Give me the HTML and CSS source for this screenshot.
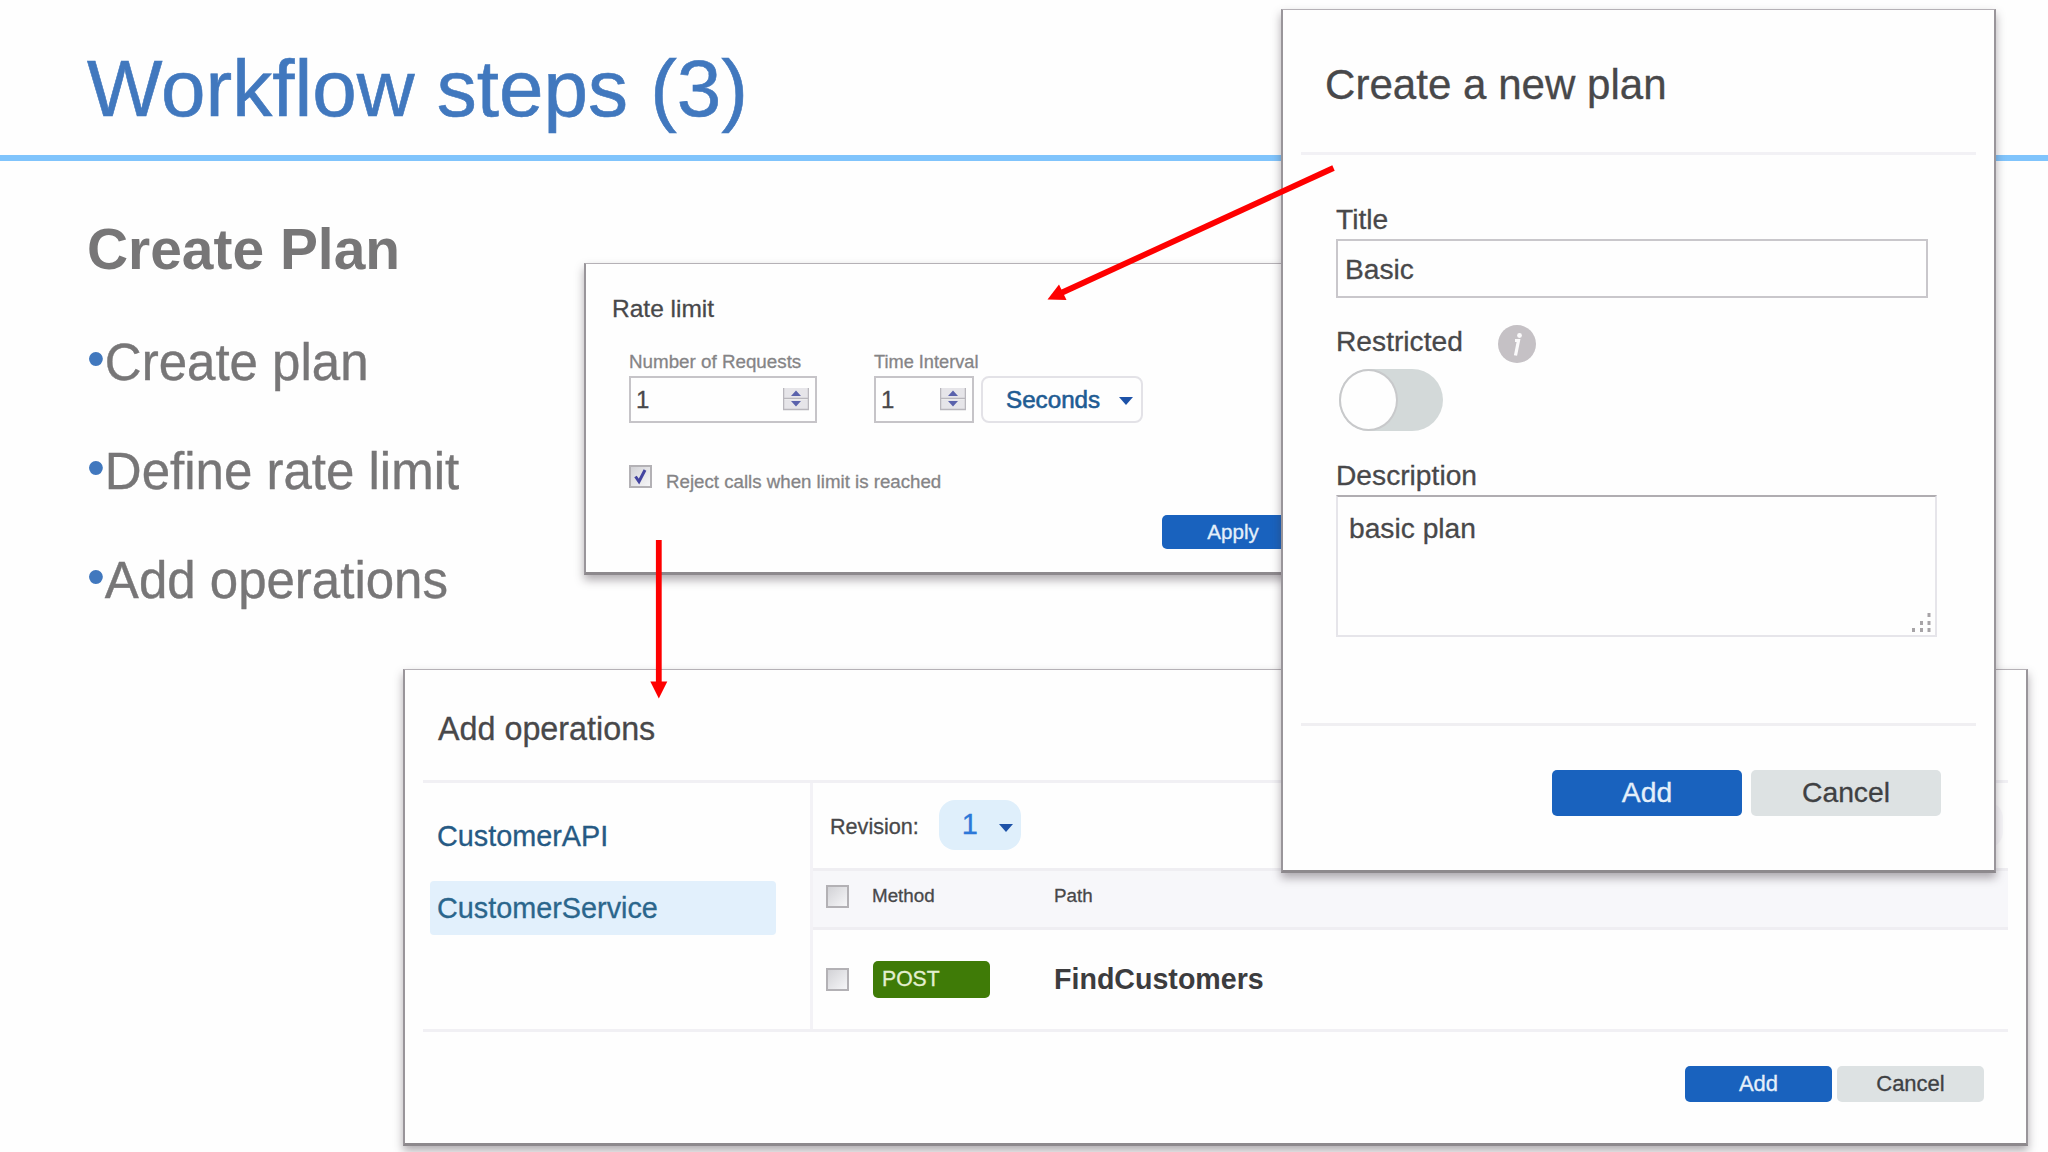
FILE: index.html
```html
<!DOCTYPE html>
<html lang="en">
<head>
    <meta charset="UTF-8">
    <meta name="viewport" content="width=device-width, initial-scale=1.0">
    <title>Workflow steps (3)</title>

    <link rel="stylesheet" href="styles.css">
</head>
<body>
<div class="slide">

    <!-- Slide heading -->
    <header class="slide-header">
        <h1>Workflow steps (3)</h1>
    </header>

    <!-- Outline -->
    <section class="outline">
        <h2>Create Plan</h2>
        <ul>
            <li>Create plan</li>
            <li>Define rate limit</li>
            <li>Add operations</li>
        </ul>
    </section>

    <!-- Rate limit window -->
    <section class="window rate-window">
        <h3>Rate limit</h3>
        <div class="rate-fields">
            <div class="rate-field requests">
                <span class="small-label">Number of Requests</span>
                <div class="number-box">
                    <span>1</span>
                    <svg class="spinner" viewBox="0 0 26 23">
                        <path d="M0 0h26v10H0zM0 12h26v10H0z" fill="#e6e5e9"/>
                        <path d="M0 10.500h26M0 21.500h26M25.500 0v22M.5 0v22" stroke="#b9b7bd" stroke-width="1.500"/>
                        <path d="M13 2.500l5 5.500h-10zM13 18.500l5-5.500h-10z" fill="#5a62ac"/>
                    </svg>
                </div>
            </div>
            <div class="rate-field interval">
                <span class="small-label narrow">Time Interval</span>
                <div class="number-box">
                    <span>1</span>
                    <svg class="spinner" viewBox="0 0 26 23">
                        <path d="M0 0h26v10H0zM0 12h26v10H0z" fill="#e6e5e9"/>
                        <path d="M0 10.500h26M0 21.500h26M25.500 0v22M.5 0v22" stroke="#b9b7bd" stroke-width="1.500"/>
                        <path d="M13 2.500l5 5.500h-10zM13 18.500l5-5.500h-10z" fill="#5a62ac"/>
                    </svg>
                </div>
            </div>
            <div class="unit-select">
                <span>Seconds</span>
                <i class="caret"></i>
            </div>
        </div>
        <div class="reject-row">
            <span class="checkbox">
                <svg viewBox="0 0 23 23"><path d="M6.500 11.500l3.500 5L16 5" fill="none" stroke="#4344a0" stroke-width="3"/></svg>
            </span>
            <span class="reject-text">Reject calls when limit is reached</span>
        </div>
        <div class="rate-actions">
            <div class="btn btn-blue btn-apply">Apply</div>
        </div>
    </section>

    <!-- Add operations window -->
    <section class="window ops-window">
        <h3>Add operations</h3>
        <div class="ops-body">
            <div class="api-list">
                <a class="api">CustomerAPI</a>
                <a class="api selected">CustomerService</a>
            </div>
            <div class="ops-table">
                <div class="revision-row">
                    <span class="revision-label">Revision:</span>
                    <div class="revision-pill">
                        <span>1</span>
                        <i class="caret"></i>
                    </div>
                    <div class="side-pill"></div>
                </div>
                <div class="ops-row ops-head">
                    <span class="checkbox"></span>
                    <span>Method</span>
                    <span>Path</span>
                </div>
                <div class="ops-row">
                    <span class="checkbox"></span>
                    <span class="badge">POST</span>
                    <span class="path">FindCustomers</span>
                </div>
            </div>
        </div>
        <div class="ops-actions">
            <div class="btn btn-blue">Add</div>
            <div class="btn btn-gray">Cancel</div>
        </div>
    </section>

    <!-- Create a new plan window -->
    <section class="window plan-window">
        <h3>Create a new plan</h3>
        <div class="plan-body">
            <div class="label">Title</div>
            <div class="text-box">Basic</div>
            <div class="restricted-row">
                <div class="label">Restricted</div>
                <svg class="info" viewBox="0 0 38 38">
                    <circle cx="19" cy="19" r="19" fill="#c5c1c5"/>
                    <circle cx="21.500" cy="10.500" r="2.400" fill="#fbfafb"/>
                    <path d="M17 15.500h3.500l-3 15" fill="none" stroke="#fbfafb" stroke-width="3.200"/>
                </svg>
            </div>
            <div class="toggle"><span class="knob"></span></div>
            <div class="label">Description</div>
            <div class="text-area">
                <span>basic plan</span>
                <svg class="grip" viewBox="0 0 19 20">
                    <path d="M15.500 0h3v4h-3zM15.500 8h3v4h-3zM15.500 15h3v4h-3zM8 8h3v4H8zM8 15h3v4H8zM0 15h3v4H0z" fill="#a7a4a7"/>
                </svg>
            </div>
        </div>
        <div class="plan-actions">
            <div class="btn btn-blue">Add</div>
            <div class="btn btn-gray">Cancel</div>
        </div>
    </section>

    <!-- Arrows between the windows -->
    <svg class="arrows" viewBox="0 0 2048 1152">
        <g stroke="#fe0000" stroke-width="5.800">
            <path d="M1333.500 168L1060 293.500"/>
            <path d="M658.800 540V684"/>
        </g>
        <g fill="#fe0000">
            <path d="M1047.500 299.500L1059 284.500L1066.500 300z"/>
            <path d="M658.800 698.500L650.300 681.500H667.300z"/>
        </g>
    </svg>

</div>
</body>
</html>
```
FILE: styles.css
```css
/* Global Reset */
* {
    margin: 0;
    padding: 0;
    box-sizing: border-box;
}

body {
    font-family: "Liberation Sans", Arial, sans-serif;
    background-color: #fefefe;
    color: #48484a;
}

svg {
    display: block;
}

.slide {
    position: relative;
    width: 2048px;
    height: 1152px;
    overflow: hidden;
}

/* Slide heading */
.slide-header {
    height: 161px;
    padding: 43px 87px 0;
    border-bottom: 6px solid #80c4fc;
}

.slide-header h1 {
    font-size: 80px;
    font-weight: normal;
    line-height: 92px;
    color: #4178be;
    -webkit-text-stroke: 0.6px #4178be;
}

/* Outline */
.outline {
    padding: 56px 87px 0;
    color: #777677;
}

.outline h2 {
    font-size: 56.9px;
    line-height: 64px;
}

.outline ul {
    margin-top: 27px;
    list-style: none;
}

.outline li {
    font-size: 51px;
    line-height: 109px;
    -webkit-text-stroke: 0.4px #777677;
}

.outline li::before {
    content: "•";
    position: relative;
    top: -4px;
    color: #4178be;
    -webkit-text-stroke: 0;
}

/* Windows laid over the slide */
.window {
    position: absolute;
    background-color: #fefefe;
    border: 2px solid #99959a;
    border-top: 1px solid #b5b1b6;
    border-bottom: 3px solid #8d898d;
    box-shadow: 0 5px 9px rgba(60, 50, 60, 0.4);
    -webkit-text-stroke: 0.3px;
}

.window h3 {
    font-weight: normal;
}

.checkbox {
    width: 23px;
    height: 23px;
    border: 2px solid #b3b1b5;
    background: linear-gradient(135deg, #d2d2d6, #f6f6f8);
    flex-shrink: 0;
}

.checkbox svg {
    margin: -2px;
    width: 23px;
    height: 23px;
}

.caret {
    border: 7.5px solid transparent;
    border-top: 8px solid #1d52a8;
    border-bottom: none;
}

.btn {
    display: flex;
    align-items: center;
    justify-content: center;
    border-radius: 5px;
}

.btn-blue {
    background-color: #1962be;
    color: #e4effa;
}

.btn-gray {
    background-color: #dde2e3;
    color: #3f4143;
}

/* Rate limit */
.rate-window {
    left: 584px;
    top: 263px;
    width: 740px;
    height: 312px;
    padding: 31px 18px 0 26px;
}

.rate-window h3 {
    font-size: 24.5px;
    line-height: 28px;
}

.rate-fields {
    display: flex;
    align-items: flex-end;
    margin: 29px 0 0 17px;
}

.requests {
    width: 188px;
    margin-right: 57px;
}

.interval {
    width: 100px;
    margin-right: 7px;
}

.small-label {
    display: block;
    margin-bottom: 4px;
    font-size: 18.8px;
    line-height: 20px;
    color: #858486;
    white-space: nowrap;
}

.small-label.narrow {
    font-size: 18.2px;
}

.number-box {
    display: flex;
    align-items: center;
    justify-content: space-between;
    height: 47px;
    padding: 0 6px 0 5px;
    border: 2px solid #c6c4c8;
    font-size: 24px;
}

.spinner {
    width: 26px;
    height: 23px;
}

.unit-select {
    display: flex;
    align-items: center;
    justify-content: space-between;
    width: 162px;
    height: 47px;
    padding: 0 8px 0 23px;
    border: 2px solid #e3e2e7;
    border-radius: 8px;
    font-size: 24.2px;
    color: #1f5c93;
    -webkit-text-stroke: 0.6px #1f5c93;
}

.unit-select .caret {
    margin-top: 3px;
}

.reject-row {
    display: flex;
    height: 28px;
    margin: 42px 0 0 17px;
}

.reject-text {
    margin-left: 14px;
    padding-top: 5px;
    font-size: 18.7px;
    line-height: 23px;
    color: #858486;
}

.rate-actions {
    display: flex;
    justify-content: flex-end;
    margin-top: 22px;
}

.btn-apply {
    width: 142px;
    height: 34px;
    font-size: 20.6px;
}

/* Add operations */
.ops-window {
    left: 403px;
    top: 669px;
    width: 1625px;
    height: 477px;
    padding: 0 18px;
}

.ops-window h3 {
    height: 113px;
    padding: 39px 0 0 15px;
    border-bottom: 3px solid #f1f0f4;
    font-size: 32.3px;
    line-height: 40px;
}

.ops-body {
    display: grid;
    grid-template-columns: 390px 1fr;
    height: 249px;
    border-bottom: 3px solid #f1f0f4;
}

.api-list {
    display: flex;
    flex-direction: column;
    gap: 18px;
    padding: 26px 34px 0 7px;
    border-right: 3px solid #f3f2f6;
}

.api {
    padding-left: 7px;
    border-radius: 4px;
    font-size: 28.8px;
    line-height: 54px;
    color: #265a84;
}

.api.selected {
    background-color: #e2f0fc;
    color: #2b668c;
}

.revision-row {
    display: flex;
    align-items: center;
    height: 85px;
    padding: 0 0 2px 17px;
    overflow: hidden;
}

.revision-label {
    margin-top: 4px;
    font-size: 21.6px;
}

.revision-pill {
    display: flex;
    align-items: center;
    justify-content: space-between;
    width: 82px;
    height: 50px;
    margin-left: 20px;
    padding: 0 8px 0 23px;
    border-radius: 16px;
    background-color: #dfeffb;
    font-size: 29px;
    color: #2c78d8;
}

.revision-pill .caret {
    margin-top: 6px;
}

.side-pill {
    width: 70px;
    height: 46px;
    margin: 0 5px 0 auto;
    border-radius: 16px;
    background-color: #f8f7fa;
}

.ops-row {
    display: grid;
    grid-template-columns: 47px 182px 1fr;
    align-items: center;
    height: 99px;
    padding-left: 13px;
}

.ops-head {
    height: 62px;
    padding-bottom: 7px;
    border-top: 3px solid #efeef2;
    border-bottom: 3px solid #efeef2;
    background-color: #f7f7fa;
    font-size: 18.8px;
}

.ops-head span + span {
    margin-left: -1px;
}

.ops-head .checkbox {
    margin-top: 1px;
}

.badge {
    width: 117px;
    height: 37px;
    padding-left: 9px;
    border-radius: 5px;
    background-color: #3f7b07;
    font-size: 21.2px;
    line-height: 35px;
    color: #e3efcf;
}

.path {
    margin-left: -1px;
    font-size: 28.6px;
    font-weight: bold;
    color: #3c3c3e;
    -webkit-text-stroke: 0;
}

.ops-actions {
    display: flex;
    justify-content: flex-end;
    gap: 5px;
    padding: 34px 24px 0 0;
}

.ops-actions .btn {
    width: 147px;
    height: 36px;
    font-size: 22px;
}

/* Create a new plan */
.plan-window {
    left: 1281px;
    top: 9px;
    width: 715px;
    height: 864px;
    padding: 0 18px;
}

.plan-window h3 {
    height: 145px;
    padding: 50px 0 0 24px;
    border-bottom: 3px solid #f2f1f5;
    font-size: 42.1px;
    line-height: 50px;
}

.plan-body {
    height: 571px;
    padding: 47px 0 0 35px;
    border-bottom: 3px solid #f0eff2;
    font-size: 28.2px;
    line-height: 34px;
}

.text-box {
    width: 592px;
    height: 59px;
    margin-top: 3px;
    padding: 11px 0 0 7px;
    border: 2px solid #c9c7cb;
}

.restricted-row {
    display: flex;
    height: 40px;
    margin-top: 26px;
}

.info {
    width: 38px;
    height: 38px;
    margin: 1px 0 0 35px;
}

.toggle {
    width: 104px;
    height: 62px;
    margin: 5px 0 27px 3px;
    border-radius: 31px;
    background-color: #d3d9d9;
}

.knob {
    display: block;
    width: 59px;
    height: 62px;
    border: 2px solid #c8c9cb;
    border-radius: 50%;
    background-color: #fefefe;
}

.text-area {
    display: flex;
    justify-content: space-between;
    width: 601px;
    height: 142px;
    margin-top: 3px;
    padding: 14px 4px 2px 11px;
    border: 2px solid #e6e5ea;
    border-top-color: #b0adb1;
}

.grip {
    align-self: flex-end;
    width: 19px;
    height: 20px;
}

.plan-actions {
    display: flex;
    justify-content: flex-end;
    gap: 9px;
    padding: 44px 35px 0 0;
}

.plan-actions .btn {
    width: 190px;
    height: 46px;
    padding-bottom: 1px;
    font-size: 28.3px;
}

/* Arrows */
.arrows {
    position: absolute;
    left: 0;
    top: 0;
    width: 2048px;
    height: 1152px;
    pointer-events: none;
}
```
